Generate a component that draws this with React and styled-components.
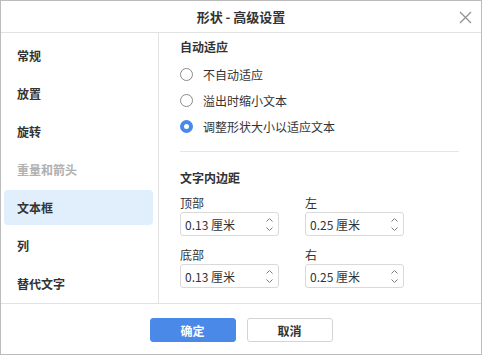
//SHAPE ADVANCED SETTINGS DIALOG

//IMPORTING
import React, { useState } from 'react';
import styled, { createGlobalStyle } from 'styled-components';

//GLOBAL
const GlobalStyle = createGlobalStyle`
	html, body {
		margin: 0;
		padding: 0;
		background: #ffffff;
	}
	* {
		box-sizing: border-box;
	}
	body {
		font-family: "Noto Sans CJK SC", "Noto Sans", "Liberation Sans", sans-serif;
		color: #333333;
	}
`
//DIALOG
const Dialog = styled.div`
	width: 482px;
	height: 355px;
	border: 1px solid #bcbcbc;
	display: flex;
	flex-direction: column;
	background: #ffffff;
`
//HEADER
const Header = styled.div`
	height: 32px;
	flex: none;
	border-bottom: 1px solid #e2e2e2;
	display: flex;
	align-items: center;
	justify-content: center;
	position: relative;
`
const Title = styled.div`
	font-size: 13px;
	font-weight: 700;
	color: #333333;
	line-height: 20px;
`
const CloseButton = styled.button`
	position: absolute;
	right: 8px;
	top: 8px;
	width: 16px;
	height: 16px;
	padding: 0;
	border: none;
	background: transparent;
	display: flex;
	align-items: center;
	justify-content: center;
	cursor: pointer;
`
//BODY
const Body = styled.div`
	flex: 1;
	display: flex;
	min-height: 0;
`
const Sidebar = styled.div`
	width: 158px;
	flex: none;
	border-right: 1px solid #e2e2e2;
	padding: 5px 5px 0 3px;
	display: flex;
	flex-direction: column;
	gap: 3px;
`
const NavItem = styled.div`
	height: 35px;
	display: flex;
	align-items: center;
	padding-left: 13px;
	border-radius: 4px;
	font-size: 12px;
	font-weight: 700;
	color: ${({ $disabled }) => ($disabled ? '#b0b0b0' : '#333333')};
	background: ${({ $active }) => ($active ? '#e1eefc' : 'transparent')};
`
const Content = styled.div`
	flex: 1;
	padding: 4px 22px 0 21px;
	display: flex;
	flex-direction: column;
`
const SectionTitle = styled.div`
	font-size: 12px;
	font-weight: 700;
	line-height: 20px;
	color: #333333;
`
const RadioList = styled.div`
	margin-top: 4px;
	display: flex;
	flex-direction: column;
`
const RadioRow = styled.label`
	height: 26px;
	display: flex;
	align-items: center;
	gap: 10px;
	font-size: 12px;
	color: #333333;
	cursor: pointer;
`
const RadioCircle = styled.span`
	width: 13px;
	height: 13px;
	border-radius: 50%;
	flex: none;
	background: #ffffff;
	border: ${({ $checked }) => ($checked ? '4px solid #4a89e8' : '1px solid #8a8a8a')};
`
const Separator = styled.div`
	height: 1px;
	background: #e6e6e6;
	margin: 12px 0 16px;
`
const FieldGrid = styled.div`
	margin-top: 6px;
	display: grid;
	grid-template-columns: 125px 99px;
	row-gap: 10px;
`
const Field = styled.div`
	display: flex;
	flex-direction: column;
`
const FieldLabel = styled.div`
	font-size: 12px;
	line-height: 18px;
	color: #333333;
`
const SpinBox = styled.div`
	width: 99px;
	height: 24px;
	border: 1px solid #d9d9d9;
	border-radius: 3px;
	display: flex;
	align-items: center;
	padding: 0 4px 0 4px;
`
const SpinValue = styled.div`
	flex: 1;
	font-size: 12px;
	color: #333333;
`
const SpinArrows = styled.div`
	display: flex;
	flex-direction: column;
	gap: 5px;
	width: 9px;
	align-items: center;
`
//FOOTER
const Footer = styled.div`
	height: 51px;
	flex: none;
	border-top: 1px solid #e2e2e2;
	display: flex;
	justify-content: center;
	align-items: flex-start;
	padding-top: 14px;
	gap: 11px;
`
const Button = styled.button`
	width: 86px;
	height: 24px;
	border-radius: 3px;
	font-family: inherit;
	font-size: 12px;
	font-weight: 700;
	padding: 0;
	cursor: pointer;
	border: 1px solid ${({ $primary }) => ($primary ? '#4a89e8' : '#d4d4d4')};
	background: ${({ $primary }) => ($primary ? '#4a89e8' : '#ffffff')};
	color: ${({ $primary }) => ($primary ? '#ffffff' : '#333333')};
`

const navItems = [
	{ label: '常规' },
	{ label: '放置' },
	{ label: '旋转' },
	{ label: '重量和箭头', disabled: true },
	{ label: '文本框', active: true },
	{ label: '列' },
	{ label: '替代文字' },
]

const fitOptions = ['不自动适应', '溢出时缩小文本', '调整形状大小以适应文本']

const paddings = [
	{ label: '顶部', value: '0.13 厘米' },
	{ label: '左', value: '0.25 厘米' },
	{ label: '底部', value: '0.13 厘米' },
	{ label: '右', value: '0.25 厘米' },
]

const CloseIcon = () => (
	<svg width='13' height='13' viewBox='0 0 13 13'>
		<path d='M1 1 L12 12 M12 1 L1 12' stroke='#8f8f8f' strokeWidth='1.2' fill='none' />
	</svg>
)

const Chevron = ({ up }) => (
	<svg width='7' height='4' viewBox='0 0 7 4'>
		<path
			d={up ? 'M0.5 3.5 L3.5 0.5 L6.5 3.5' : 'M0.5 0.5 L3.5 3.5 L6.5 0.5'}
			stroke='#7a7a7a'
			strokeWidth='1'
			fill='none'
		/>
	</svg>
)

const NumberField = ({ label, value }) => (
	<Field>
		<FieldLabel>{label}</FieldLabel>
		<SpinBox>
			<SpinValue>{value}</SpinValue>
			<SpinArrows>
				<Chevron up />
				<Chevron />
			</SpinArrows>
		</SpinBox>
	</Field>
)

//APP
const App = () => {
	const [fit, setFit] = useState(2)
	return (
		<>
			<GlobalStyle />
			<Dialog>
				<Header>
					<Title>形状 - 高级设置</Title>
					<CloseButton aria-label='关闭'>
						<CloseIcon />
					</CloseButton>
				</Header>
				<Body>
					<Sidebar>
						{navItems.map((item) => (
							<NavItem key={item.label} $active={item.active} $disabled={item.disabled}>
								{item.label}
							</NavItem>
						))}
					</Sidebar>
					<Content>
						<SectionTitle>自动适应</SectionTitle>
						<RadioList>
							{fitOptions.map((option, i) => (
								<RadioRow key={option} onClick={() => setFit(i)}>
									<RadioCircle $checked={fit === i} />
									{option}
								</RadioRow>
							))}
						</RadioList>
						<Separator />
						<SectionTitle>文字内边距</SectionTitle>
						<FieldGrid>
							{paddings.map((p) => (
								<NumberField key={p.label} label={p.label} value={p.value} />
							))}
						</FieldGrid>
					</Content>
				</Body>
				<Footer>
					<Button $primary>确定</Button>
					<Button>取消</Button>
				</Footer>
			</Dialog>
		</>
	)
}

export default App;
